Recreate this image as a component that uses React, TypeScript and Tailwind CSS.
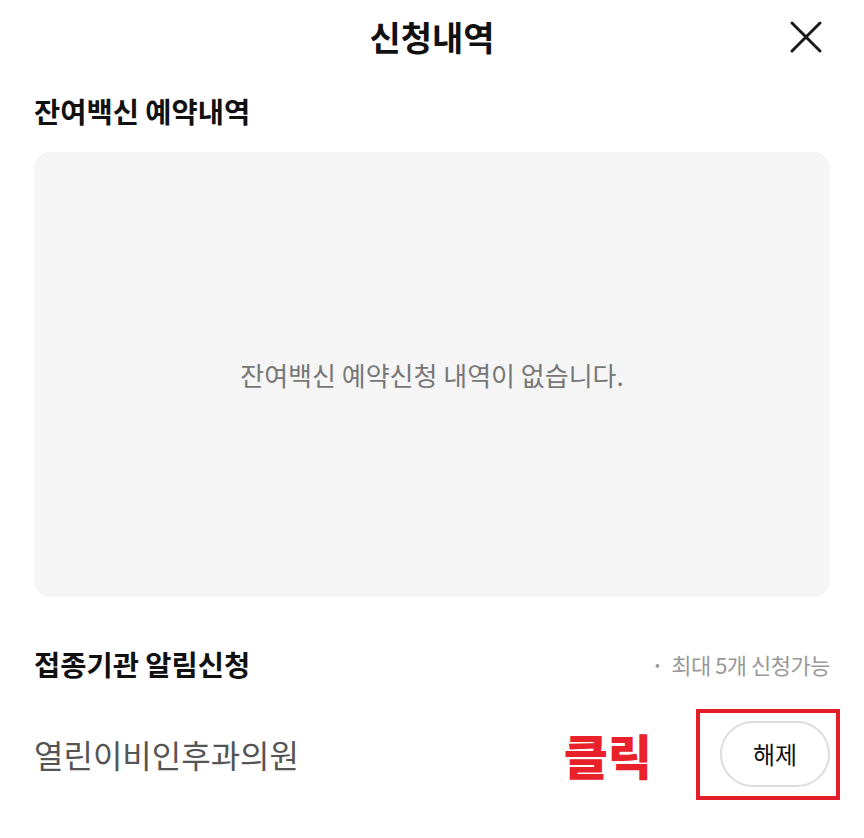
import React from "react";

export default function App() {
  const font = { fontFamily: '"Noto Sans CJK KR", "Noto Sans", sans-serif' };
  return (
    <div className="w-[864px] h-[838px] bg-white overflow-hidden" style={font}>
      <div className="relative h-[76px] flex items-center justify-center">
        <h1 className="text-[34px] font-bold text-[#111] leading-none -mt-[2px]">신청내역</h1>
        <button className="absolute right-[40px] top-[19px] w-[36px] h-[36px] flex items-center justify-center">
          <svg width="34" height="34" viewBox="0 0 34 34" fill="none" stroke="#1a1a1a" strokeWidth="3" strokeLinecap="round">
            <path d="M3 3L31 31M31 3L3 31" />
          </svg>
        </button>
      </div>
      <div className="px-[34px] pt-[21px]">
        <h2 className="text-[28.5px] font-bold text-[#111] leading-none">잔여백신 예약내역</h2>
        <div className="mt-[26px] h-[445px] rounded-[16px] bg-[#f5f5f5] flex items-center justify-center">
          <p className="text-[26px] text-[#777]">잔여백신 예약신청 내역이 없습니다.</p>
        </div>
        <div className="mt-[51px] flex items-center justify-between">
          <h2 className="text-[28.5px] font-bold text-[#111] leading-none">접종기관 알림신청</h2>
          <span className="text-[22px] text-[#999] tracking-[-0.5px] flex items-center">
            <span className="text-[14px] mr-[12px]">•</span>최대 5개 신청가능
          </span>
        </div>
        <div className="mt-[28px] flex items-center justify-between">
          <span className="text-[32px] text-[#555]">열린이비인후과의원</span>
          <div className="flex items-center">
            <span className="text-[48px] font-black text-[#e8212b] mr-[44px] leading-none">클릭</span>
            <div className="border-[4px] border-[#e41e26] w-[144px] h-[91px] -mr-[10px] flex items-center justify-center">
              <button className="w-[110px] h-[66px] rounded-full border-2 border-[#dcdcdc] bg-white text-[24px] text-[#111] ml-[14px] mt-[0px]">해제</button>
            </div>
          </div>
        </div>
      </div>
    </div>
  );
}
